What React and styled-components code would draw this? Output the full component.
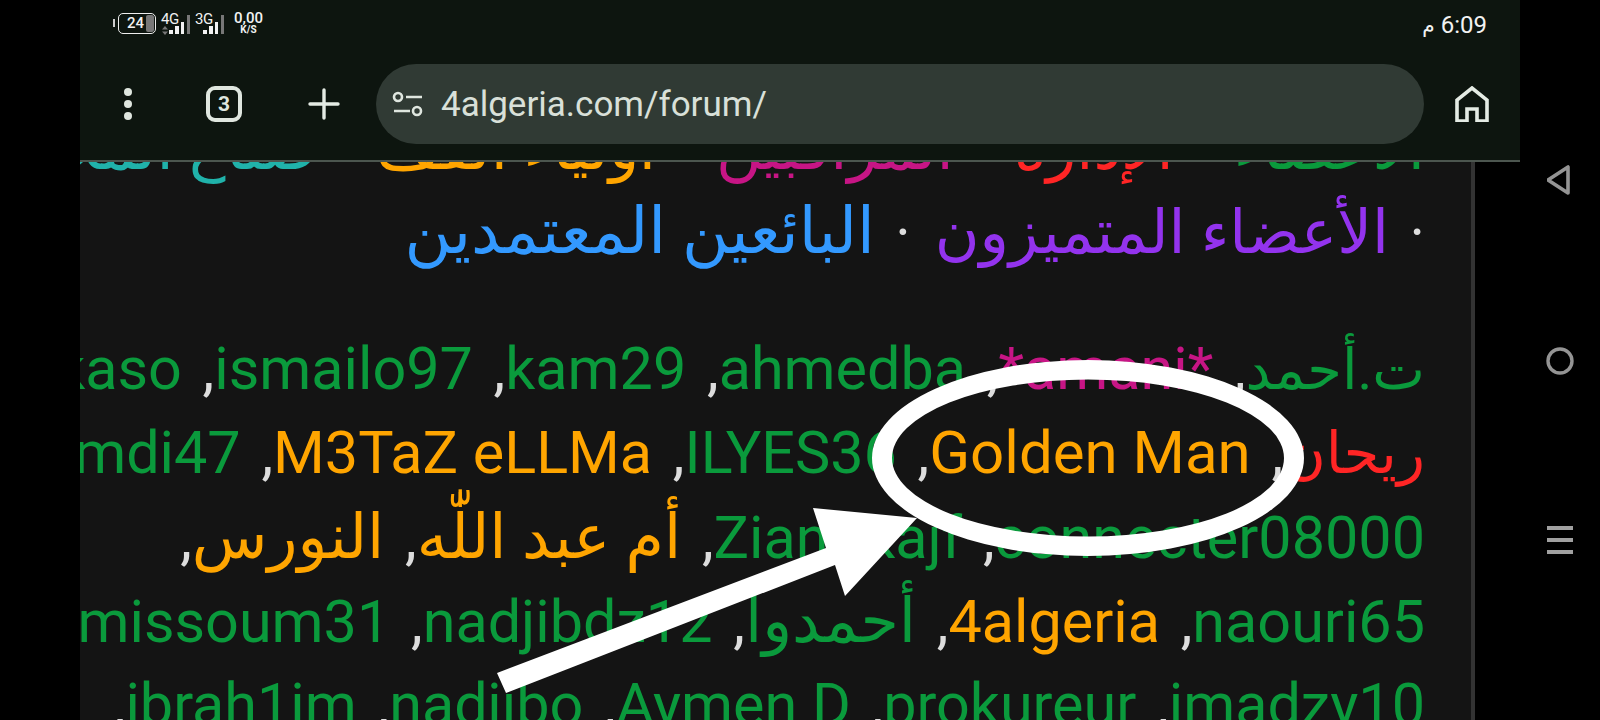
import styled, { createGlobalStyle } from 'styled-components';

const GlobalStyle = createGlobalStyle`
  html, body {
    margin: 0;
    background: #000;
  }
  body {
    font-family: Roboto, 'DejaVu Sans', sans-serif;
  }
`;

const statusIcons = [
  { label: '4G', arrows: true },
  { label: '3G', arrows: false },
];

const barHeights = [4, 8, 12, 19];

const colors = {
  green: '#0a9a3c',
  red: '#ff2525',
  pink: '#c71585',
  orange: '#ffa500',
  teal: '#20b2aa',
  purple: '#9333ee',
  blue: '#3399ff',
};

const groupLinks = [
  [
    ['الأعضاء', 'green'],
    ['الإدارة', 'red'],
    ['المراقبين', 'pink'],
    ['أولياء القف', 'orange'],
    ['صناع المحتوى', 'teal'],
  ],
  [
    ['الأعضاء المتميزون', 'purple', 61],
    ['البائعين المعتمدين', 'blue', 64],
  ],
];

const memberLines = [
  [
    ['ت.أحمد', 'green', 56],
    ['*amani*', 'pink'],
    ['ahmedba', 'green'],
    ['kam29', 'green'],
    ['ismailo97', 'green'],
    ['kaso', 'green'],
  ],
  [
    ['ريحان', 'red', 58],
    ['Golden Man', 'orange', 60],
    ['ILYES36', 'green'],
    ['M3TaZ eLLMa', 'orange'],
    ['hamdi47', 'green'],
  ],
  [
    ['connecter08000', 'green'],
    ['Zian\u00a0\u00a0Kajf', 'green'],
    ['أم عبد اللّٰه', 'orange'],
    ['النورس', 'orange'],
  ],
  [
    ['naouri65', 'green'],
    ['4algeria', 'orange'],
    ['أحمدوا', 'green'],
    ['nadjibdz12', 'green'],
    ['missoum31', 'green'],
  ],
  [
    ['imadzy10', 'green'],
    ['prokureur', 'green'],
    ['Aymen D', 'green'],
    ['nadjibo', 'green'],
    ['ibrah1im', 'green'],
  ],
];

const isArabic = (text) => /[\u0600-\u06FF]/.test(text);

const App = () => (
  <>
    <GlobalStyle />
    <Screen>
      <Browser>
        <Chrome>
          <StatusBar>
            <Battery>
              <BatteryLevel>24</BatteryLevel>
            </Battery>
            {statusIcons.map((icon) => (
              <Network key={icon.label}>
                <NetworkLabel>{icon.label}</NetworkLabel>
                {icon.arrows && (
                  <NetworkArrows width="6" height="9" viewBox="0 0 6 9" fill="#777">
                    <path d="M3 0l3 3.4H0zM3 9L0 5.6h6z" />
                  </NetworkArrows>
                )}
                <SignalBars>
                  {barHeights.map((height, i) => (
                    <SignalBar key={i} style={{ height }} $empty={i === 3} />
                  ))}
                </SignalBars>
              </Network>
            ))}
            <Speed>
              <SpeedValue>0,00</SpeedValue>
              <SpeedUnit>K/S</SpeedUnit>
            </Speed>
            <Clock>
              <ClockSuffix>م</ClockSuffix>
              <span>6:09</span>
            </Clock>
          </StatusBar>
          <Toolbar>
            <ToolButton $width={96}>
              <svg width="10" height="34" viewBox="0 0 10 34">
                <circle cx="5" cy="5" r="4" fill="#dfe6df" />
                <circle cx="5" cy="17" r="4" fill="#dfe6df" />
                <circle cx="5" cy="29" r="4" fill="#dfe6df" />
              </svg>
            </ToolButton>
            <ToolButton $width={96}>
              <TabCount>3</TabCount>
            </ToolButton>
            <ToolButton $width={104}>
              <svg width="32" height="32" viewBox="0 0 32 32">
                <path d="M16 2v28M2 16h28" stroke="#e4ebe4" strokeWidth="3.4" strokeLinecap="round" />
              </svg>
            </ToolButton>
            <AddressBar>
              <svg width="32" height="26" viewBox="0 0 32 26" fill="none" stroke="#dfe6df" strokeWidth="2.6">
                <circle cx="6" cy="6" r="4" />
                <path d="M14 6h16M2 20h16" />
                <circle cx="25" cy="20" r="4" />
              </svg>
              <Url>4algeria.com/forum/</Url>
            </AddressBar>
            <ToolButton $width={96}>
              <svg width="34" height="36" viewBox="0 0 34 36" fill="none" stroke="#e4ebe4" strokeWidth="3.6">
                <path d="M2 35V14L17 2l15 12v21H22V23H12v12z" />
              </svg>
            </ToolButton>
          </Toolbar>
        </Chrome>
        <ContentRow>
          <Content dir="rtl">
            <LinkBlock>
              {groupLinks.map((line, i) => (
                <TextLine key={i}>
                  {line.map(([text, color, size], j) => (
                    <span key={text}>
                      {(i > 0 || j > 0) && <Bullet>·</Bullet>}
                      <Name $color={colors[color]} $size={size ?? 62}>
                        {text}
                      </Name>
                    </span>
                  ))}
                </TextLine>
              ))}
            </LinkBlock>
            {memberLines.map((line, i) => (
              <TextLine key={i}>
                {line.map(([text, color, size]) => (
                  <span key={text}>
                    <Name $color={colors[color]} $size={size ?? (isArabic(text) ? 62 : 59.3)}>
                      {text}
                    </Name>
                    <Comma>, </Comma>
                  </span>
                ))}
              </TextLine>
            ))}
          </Content>
          <Scrollbar />
          <Gutter />
        </ContentRow>
        <Annotation viewBox="0 0 1600 720" fill="#fff">
          <path
            fillRule="evenodd"
            d="M872 458a216 98 0 1 0 432 0a216 98 0 1 0 -432 0zM892 458a196 78.5 0 1 0 392 0a196 78.5 0 1 0 -392 0z"
          />
          <path d="M497 673L826 548L813 508L917 518L845 596L835 565L506 693z" />
        </Annotation>
      </Browser>
      <NavBar>
        <svg width="26" height="32" viewBox="0 0 26 32" fill="none" stroke="#949494" strokeWidth="3.6" strokeLinejoin="round">
          <path d="M21 3v26L1 16z" />
        </svg>
        <svg width="28" height="28" viewBox="0 0 28 28" fill="none" stroke="#949494" strokeWidth="3.4">
          <circle cx="14" cy="14" r="12" />
        </svg>
        <svg width="26" height="28" viewBox="0 0 26 28" stroke="#a0a0a0" strokeWidth="4">
          <path d="M0 2h26M0 14h26M0 26h26" />
        </svg>
      </NavBar>
    </Screen>
  </>
);

export default App;

const Screen = styled.div`
  width: 1600px;
  height: 720px;
  padding-left: 80px;
  box-sizing: border-box;
  display: flex;
  overflow: hidden;
  background: #000;
`;

const Browser = styled.div`
  position: relative;
  width: 1440px;
  height: 720px;
  display: flex;
  flex-direction: column;
  overflow: hidden;
`;

const Chrome = styled.header`
  flex: none;
  height: 162px;
  background: #0d150f;
  border-bottom: 2px solid #4c564f;
  box-sizing: border-box;
  display: flex;
  flex-direction: column;
  position: relative;
  z-index: 1;
`;

const StatusBar = styled.div`
  height: 64px;
  flex: none;
  display: flex;
  align-items: flex-start;
  padding: 11px 33px 0 38px;
  box-sizing: border-box;
  color: #f2f2f2;
`;

const Battery = styled.div`
  position: relative;
  width: 38px;
  height: 21px;
  margin-top: 2px;
  border: 1.5px solid #eee;
  border-radius: 5px;
  box-sizing: border-box;
  &::before {
    content: '';
    position: absolute;
    left: -6px;
    top: 5px;
    width: 2px;
    height: 8px;
    background: #ccc;
  }
  &::after {
    content: '';
    position: absolute;
    right: 1px;
    top: 1px;
    bottom: 1px;
    width: 8px;
    border-radius: 2px;
    background: #777;
  }
`;

const BatteryLevel = styled.span`
  position: absolute;
  left: 8px;
  top: 1px;
  font-size: 15px;
  line-height: 16px;
  font-weight: 500;
`;

const Network = styled.div`
  position: relative;
  width: 29px;
  height: 23px;
  margin-left: 5px;
  margin-top: 2px;
`;

const NetworkLabel = styled.span`
  position: absolute;
  left: 0;
  top: 0;
  font-size: 15px;
  line-height: 12px;
  letter-spacing: -0.5px;
`;

const NetworkArrows = styled.svg`
  position: absolute;
  left: 1px;
  bottom: 1px;
`;

const SignalBars = styled.div`
  height: 21px;
  display: flex;
  align-items: flex-end;
  justify-content: flex-end;
  gap: 2.2px;
`;

const SignalBar = styled.span`
  width: 3.5px;
  background: ${({ $empty }) => ($empty ? '#777' : '#f2f2f2')};
`;

const Speed = styled.div`
  margin-left: 10px;
  display: flex;
  flex-direction: column;
  align-items: center;
`;

const SpeedValue = styled.span`
  font-size: 15px;
  line-height: 14px;
  font-weight: 500;
`;

const SpeedUnit = styled.span`
  font-size: 10px;
  line-height: 9px;
  font-weight: 700;
`;

const Clock = styled.div`
  margin-left: auto;
  display: flex;
  align-items: center;
  gap: 6px;
  font-size: 24px;
  line-height: 28px;
`;

const ClockSuffix = styled.span`
  font-size: 20px;
`;

const Toolbar = styled.div`
  height: 80px;
  display: flex;
  align-items: stretch;
`;

const ToolButton = styled.div`
  flex: none;
  width: ${({ $width }) => $width}px;
  display: flex;
  align-items: center;
  justify-content: center;
`;

const TabCount = styled.span`
  width: 36px;
  height: 36px;
  box-sizing: border-box;
  border: 4px solid #dfe6df;
  border-radius: 9px;
  display: flex;
  align-items: center;
  justify-content: center;
  color: #dfe6df;
  font-size: 21px;
  font-weight: 700;
`;

const AddressBar = styled.div`
  flex: 1;
  height: 80px;
  border-radius: 40px;
  background: #303a34;
  display: flex;
  align-items: center;
  gap: 17px;
  padding-left: 16px;
`;

const Url = styled.span`
  font-size: 35px;
  color: #d9e0d9;
`;

const ContentRow = styled.div`
  flex: 1;
  min-height: 0;
  display: flex;
`;

const Content = styled.main`
  flex: none;
  width: 1391px;
  background: #141414;
  overflow: hidden;
  padding-right: 46px;
  box-sizing: border-box;
`;

const LinkBlock = styled.div`
  margin-top: -56px;
  margin-bottom: 53px;
`;

const TextLine = styled.div`
  height: 84px;
  line-height: 84px;
  font-size: 59.3px;
  white-space: nowrap;
`;

const Name = styled.span`
  color: ${({ $color }) => $color};
  font-size: ${({ $size }) => $size}px;
  unicode-bidi: isolate;
`;

const Comma = styled.span`
  color: #dddddd;
  word-spacing: 6px;
`;

const Bullet = styled.span`
  display: inline-block;
  width: 12px;
  margin-inline: 24px;
  color: #dddddd;
  text-align: center;
  span:first-child > & {
    margin-inline-start: 0;
  }
`;

const Scrollbar = styled.div`
  flex: none;
  width: 4px;
  background: #333;
`;

const Gutter = styled.div`
  flex: 1;
  background: #000;
`;

const Annotation = styled.svg`
  position: absolute;
  left: -80px;
  top: 0;
  width: 1600px;
  height: 720px;
  z-index: 2;
  pointer-events: none;
`;

const NavBar = styled.nav`
  flex: none;
  width: 80px;
  height: 720px;
  display: flex;
  flex-direction: column;
  align-items: center;
  justify-content: space-between;
  padding: 164px 0 166px;
  box-sizing: border-box;
`;
